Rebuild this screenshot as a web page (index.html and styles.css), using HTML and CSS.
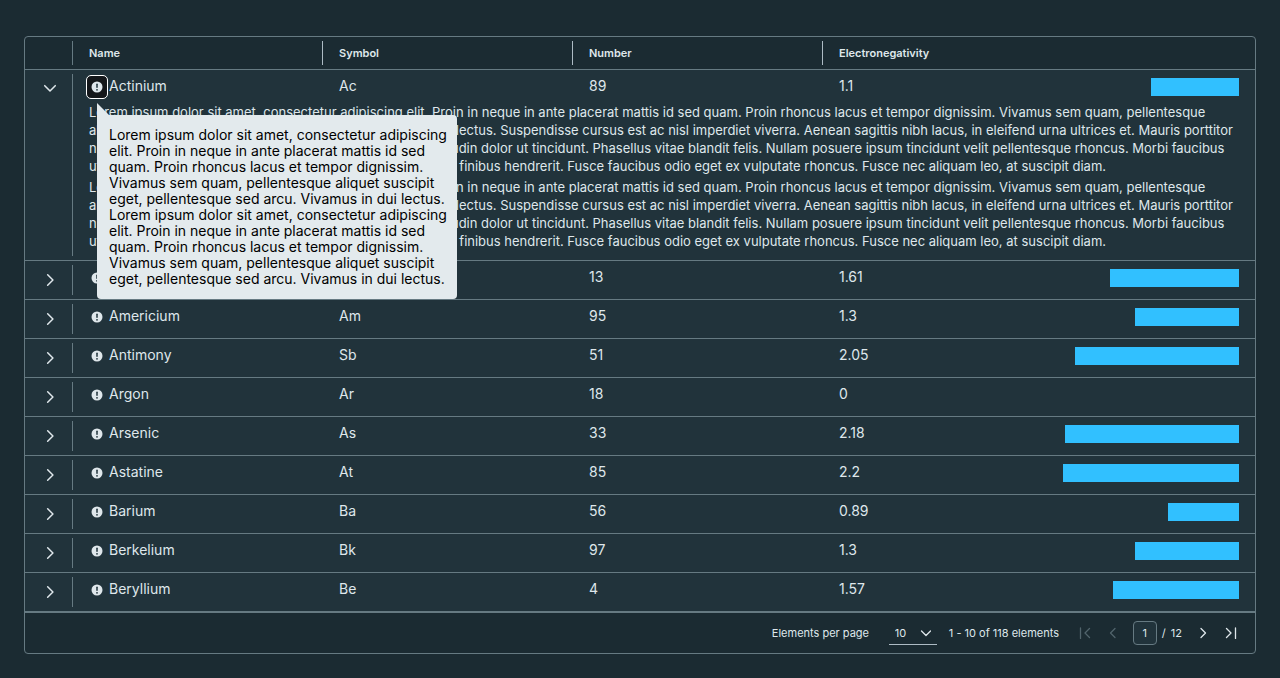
FILE: index.html
```html
<!DOCTYPE html>
<html lang="en">
<head>
<meta charset="utf-8">
<meta name="viewport" content="width=device-width, initial-scale=1">
<title>Elements</title>
<link rel="stylesheet" href="styles.css">
</head>
<body>
<svg class="sprite" aria-hidden="true">
  <symbol id="angle" viewBox="0 0 12 12"><path d="M4 1.5 8.5 6 4 10.5" fill="none" stroke="currentColor" stroke-width="1.3" stroke-linecap="round" stroke-linejoin="round"/></symbol>
  <symbol id="last" viewBox="0 0 12 12"><path d="M1.5 1.5 6 6 1.5 10.5M10.5 1v10.5" fill="none" stroke="currentColor" stroke-width="1.3" stroke-linecap="round" stroke-linejoin="round"/></symbol>
  <symbol id="info" viewBox="0 0 12 12"><circle cx="6" cy="6" r="5.5" fill="currentColor"/><path d="M6 3.2v3" stroke="#21333b" stroke-width="1.5" stroke-linecap="round"/><circle cx="6" cy="8.8" r=".9" fill="#21333b"/></symbol>
</svg>
<main class="datagrid">
  <table class="grid">
    <colgroup><col class="col-caret"><col class="col-text"><col class="col-text"><col class="col-text"><col></colgroup>
    <thead>
      <tr><th class="caret-head"></th><th class="sep" scope="col">Name</th><th class="sep" scope="col">Symbol</th><th class="sep" scope="col">Number</th><th scope="col">Electronegativity</th></tr>
    </thead>
    <tbody id="rows"></tbody>
  </table>
  <footer class="footer">
    <div class="page-size">
      <label for="size">Elements per page</label>
      <span class="select-wrap"><select id="size"><option>10</option><option>20</option><option>50</option></select><svg class="icon select-icon"><use href="#angle"/></svg></span>
    </div>
    <span class="summary">1 - 10 of 118 elements</span>
    <nav class="pager" aria-label="Pagination">
      <button class="page-button" disabled aria-label="First page"><svg class="icon flip"><use href="#last"/></svg></button>
      <button class="page-button" disabled aria-label="Previous page"><svg class="icon flip"><use href="#angle"/></svg></button>
      <span class="page-current"><input class="page-input" type="text" value="1" aria-label="Current page"><span>/</span><span>12</span></span>
      <button class="page-button" aria-label="Next page"><svg class="icon"><use href="#angle"/></svg></button>
      <button class="page-button" aria-label="Last page"><svg class="icon"><use href="#last"/></svg></button>
    </nav>
  </footer>
</main>
<script src="script.js"></script>
</body>
</html>
```

FILE: styles.css
```css
* { box-sizing: border-box; }
body {
  margin: 0;
  padding: 36px 24px 24px;
  background: #1b2b32;
  color: #dfe7eb;
  font-family: Inter, "Open Sans", sans-serif;
  font-size: 14px;
  line-height: 18px;
}
button, input, select { margin: 0; padding: 0; border: 0; background: none; color: inherit; font: inherit; }
button { display: inline-flex; align-items: center; justify-content: center; }
.sprite { position: absolute; width: 0; height: 0; }
.icon { display: block; width: 12px; height: 12px; }
.datagrid { border: 1px solid #667a82; border-radius: 4px; }
.grid { width: 100%; table-layout: fixed; border-collapse: separate; border-spacing: 0; }
.col-caret { width: 48px; }
.col-text { width: 250px; }
th {
  height: 33px;
  padding: 0 16px;
  border-bottom: 1px solid #667a82;
  text-align: left;
  font-size: 11px;
  line-height: 16px;
  font-weight: 600;
}
.sep { background: linear-gradient(#adbbc4, #adbbc4) right center / 1px 24px no-repeat; }
.caret-head { background: linear-gradient(#667a82, #667a82) right center / 1px 24px no-repeat; }
tbody { background: #21333b; }
td { padding: 7px 16px 12px; border-bottom: 1px solid #667a82; vertical-align: top; }
.open-row td { padding-bottom: 7px; border-bottom: 0; }
.open-row .caret-cell, .caret-cell {
  padding: 10px 14px 8px 16px;
  border-bottom: 1px solid #667a82;
  background: linear-gradient(#667a82, #667a82) right center / 1px calc(100% - 8px) no-repeat;
}
.open-row .caret-cell { padding-top: 9px; border-bottom: 1px solid #667a82; }
.caret { width: 18px; height: 18px; }
.caret .icon { width: 14px; height: 14px; }
.open-row .caret .icon { transform: rotate(90deg); }
.name { display: flex; align-items: flex-start; gap: 4px; position: relative; }
.info { width: 16px; height: 18px; margin-top: 1px; }
.info.focused { background: #14171a; border-radius: 2px; outline: 1px solid #fff; outline-offset: 2px; box-shadow: 0 0 0 2px #14171a; }
.value { display: flex; justify-content: space-between; }
.bar { height: 18px; margin-top: 1px; background: #31c0ff; }
.detail { padding: 0 16px 10px; font-size: 13px; }
.detail p { margin: 0 0 3px; }
.detail p:last-child { margin-bottom: 0; }
.tooltip {
  position: absolute;
  z-index: 2;
  top: 38px;
  left: 8px;
  width: 360px;
  padding: 12px;
  background: #e3eaed;
  color: #000;
  border-radius: 0 4px 4px 4px;
  line-height: 16px;
  white-space: nowrap;
}
.tooltip::before {
  content: "";
  position: absolute;
  left: 0;
  bottom: 100%;
  border-left: 12px solid #e3eaed;
  border-top: 12px solid transparent;
}
.footer {
  display: flex;
  align-items: center;
  justify-content: flex-end;
  gap: 12px;
  min-height: 41px;
  padding: 0 18px 0 16px;
  border-top: 1px solid #667a82;
  font-size: 11px;
}
.page-size { display: flex; align-items: center; gap: 13px; }
.page-size label { min-width: 104px; }
.summary { min-width: 116px; }
.select-wrap { display: grid; align-items: center; width: 48px; height: 24px; border-bottom: 1px solid #adbbc4; }
.select-wrap > * { grid-area: 1 / 1; }
.select-wrap select { appearance: none; width: 100%; padding-left: 6px; outline: 0; }
.select-icon { justify-self: end; margin-right: 5px; transform: rotate(90deg); pointer-events: none; }
.pager { display: flex; align-items: center; gap: 16px; margin-left: 2px; }
.page-button { width: 12px; height: 24px; }
.page-button:disabled { color: #51646c; }
.flip { transform: scaleX(-1); }
.page-current { display: flex; align-items: center; gap: 5px; margin: 0 -1px 0 -2px; }
.page-input { width: 24px; height: 24px; border: 1px solid #667a82; border-radius: 4px; background: #21333b; text-align: center; }
```

FILE: script.js
```js
const elements = [
  ["Actinium", "Ac", 89, 1.1],
  ["Aluminium", "Al", 13, 1.61],
  ["Americium", "Am", 95, 1.3],
  ["Antimony", "Sb", 51, 2.05],
  ["Argon", "Ar", 18, 0],
  ["Arsenic", "As", 33, 2.18],
  ["Astatine", "At", 85, 2.2],
  ["Barium", "Ba", 56, 0.89],
  ["Berkelium", "Bk", 97, 1.3],
  ["Beryllium", "Be", 4, 1.57]
];

const paragraph = `<p>Lorem ipsum dolor sit amet, consectetur adipiscing elit. Proin in neque in ante placerat mattis id sed quam. Proin rhoncus lacus et tempor dignissim. Vivamus sem quam, pellentesque<br>
aliquet suscipit eget, pellentesque sed arcu. Vivamus in dui lectus. Suspendisse cursus est ac nisl imperdiet viverra. Aenean sagittis nibh lacus, in eleifend urna ultrices et. Mauris porttitor<br>
nisi nec velit pharetra porttitor. Vestibulum vulputate sollicitudin dolor ut tincidunt. Phasellus vitae blandit felis. Nullam posuere ipsum tincidunt velit pellentesque rhoncus. Morbi faucibus<br>
ut ipsum at malesuada. Nam vestibulum felis sit amet metus finibus hendrerit. Fusce faucibus odio eget ex vulputate rhoncus. Fusce nec aliquam leo, at suscipit diam.</p>`;

const hint = `Lorem ipsum dolor sit amet, consectetur adipiscing<br>elit. Proin in neque in ante placerat mattis id sed<br>quam. Proin rhoncus lacus et tempor dignissim.<br>Vivamus sem quam, pellentesque aliquet suscipit<br>eget, pellentesque sed arcu. Vivamus in dui lectus.`;

document.getElementById("rows").innerHTML = elements.map(([name, symbol, number, value], i) => {
  const open = i === 0;
  const bar = value ? `<span class="bar" style="width:${Math.round(value * 80)}px"></span>` : "";
  return `<tr class="${open ? "open-row" : ""}">
    <td class="caret-cell" ${open ? 'rowspan="2"' : ""}><button class="caret" aria-expanded="${open}" aria-label="Details of ${name}"><svg class="icon"><use href="#angle"/></svg></button></td>
    <td><div class="name"><button class="info ${open ? "focused" : ""}" aria-label="About ${name}"><svg class="icon"><use href="#info"/></svg></button><span>${name}</span>${open ? `<div class="tooltip" role="tooltip">${hint}<br>${hint}</div>` : ""}</div></td>
    <td>${symbol}</td><td>${number}</td>
    <td><div class="value"><span>${value}</span>${bar}</div></td>
  </tr>${open ? `<tr><td class="detail" colspan="4">${paragraph}${paragraph}</td></tr>` : ""}`;
}).join("");
```
